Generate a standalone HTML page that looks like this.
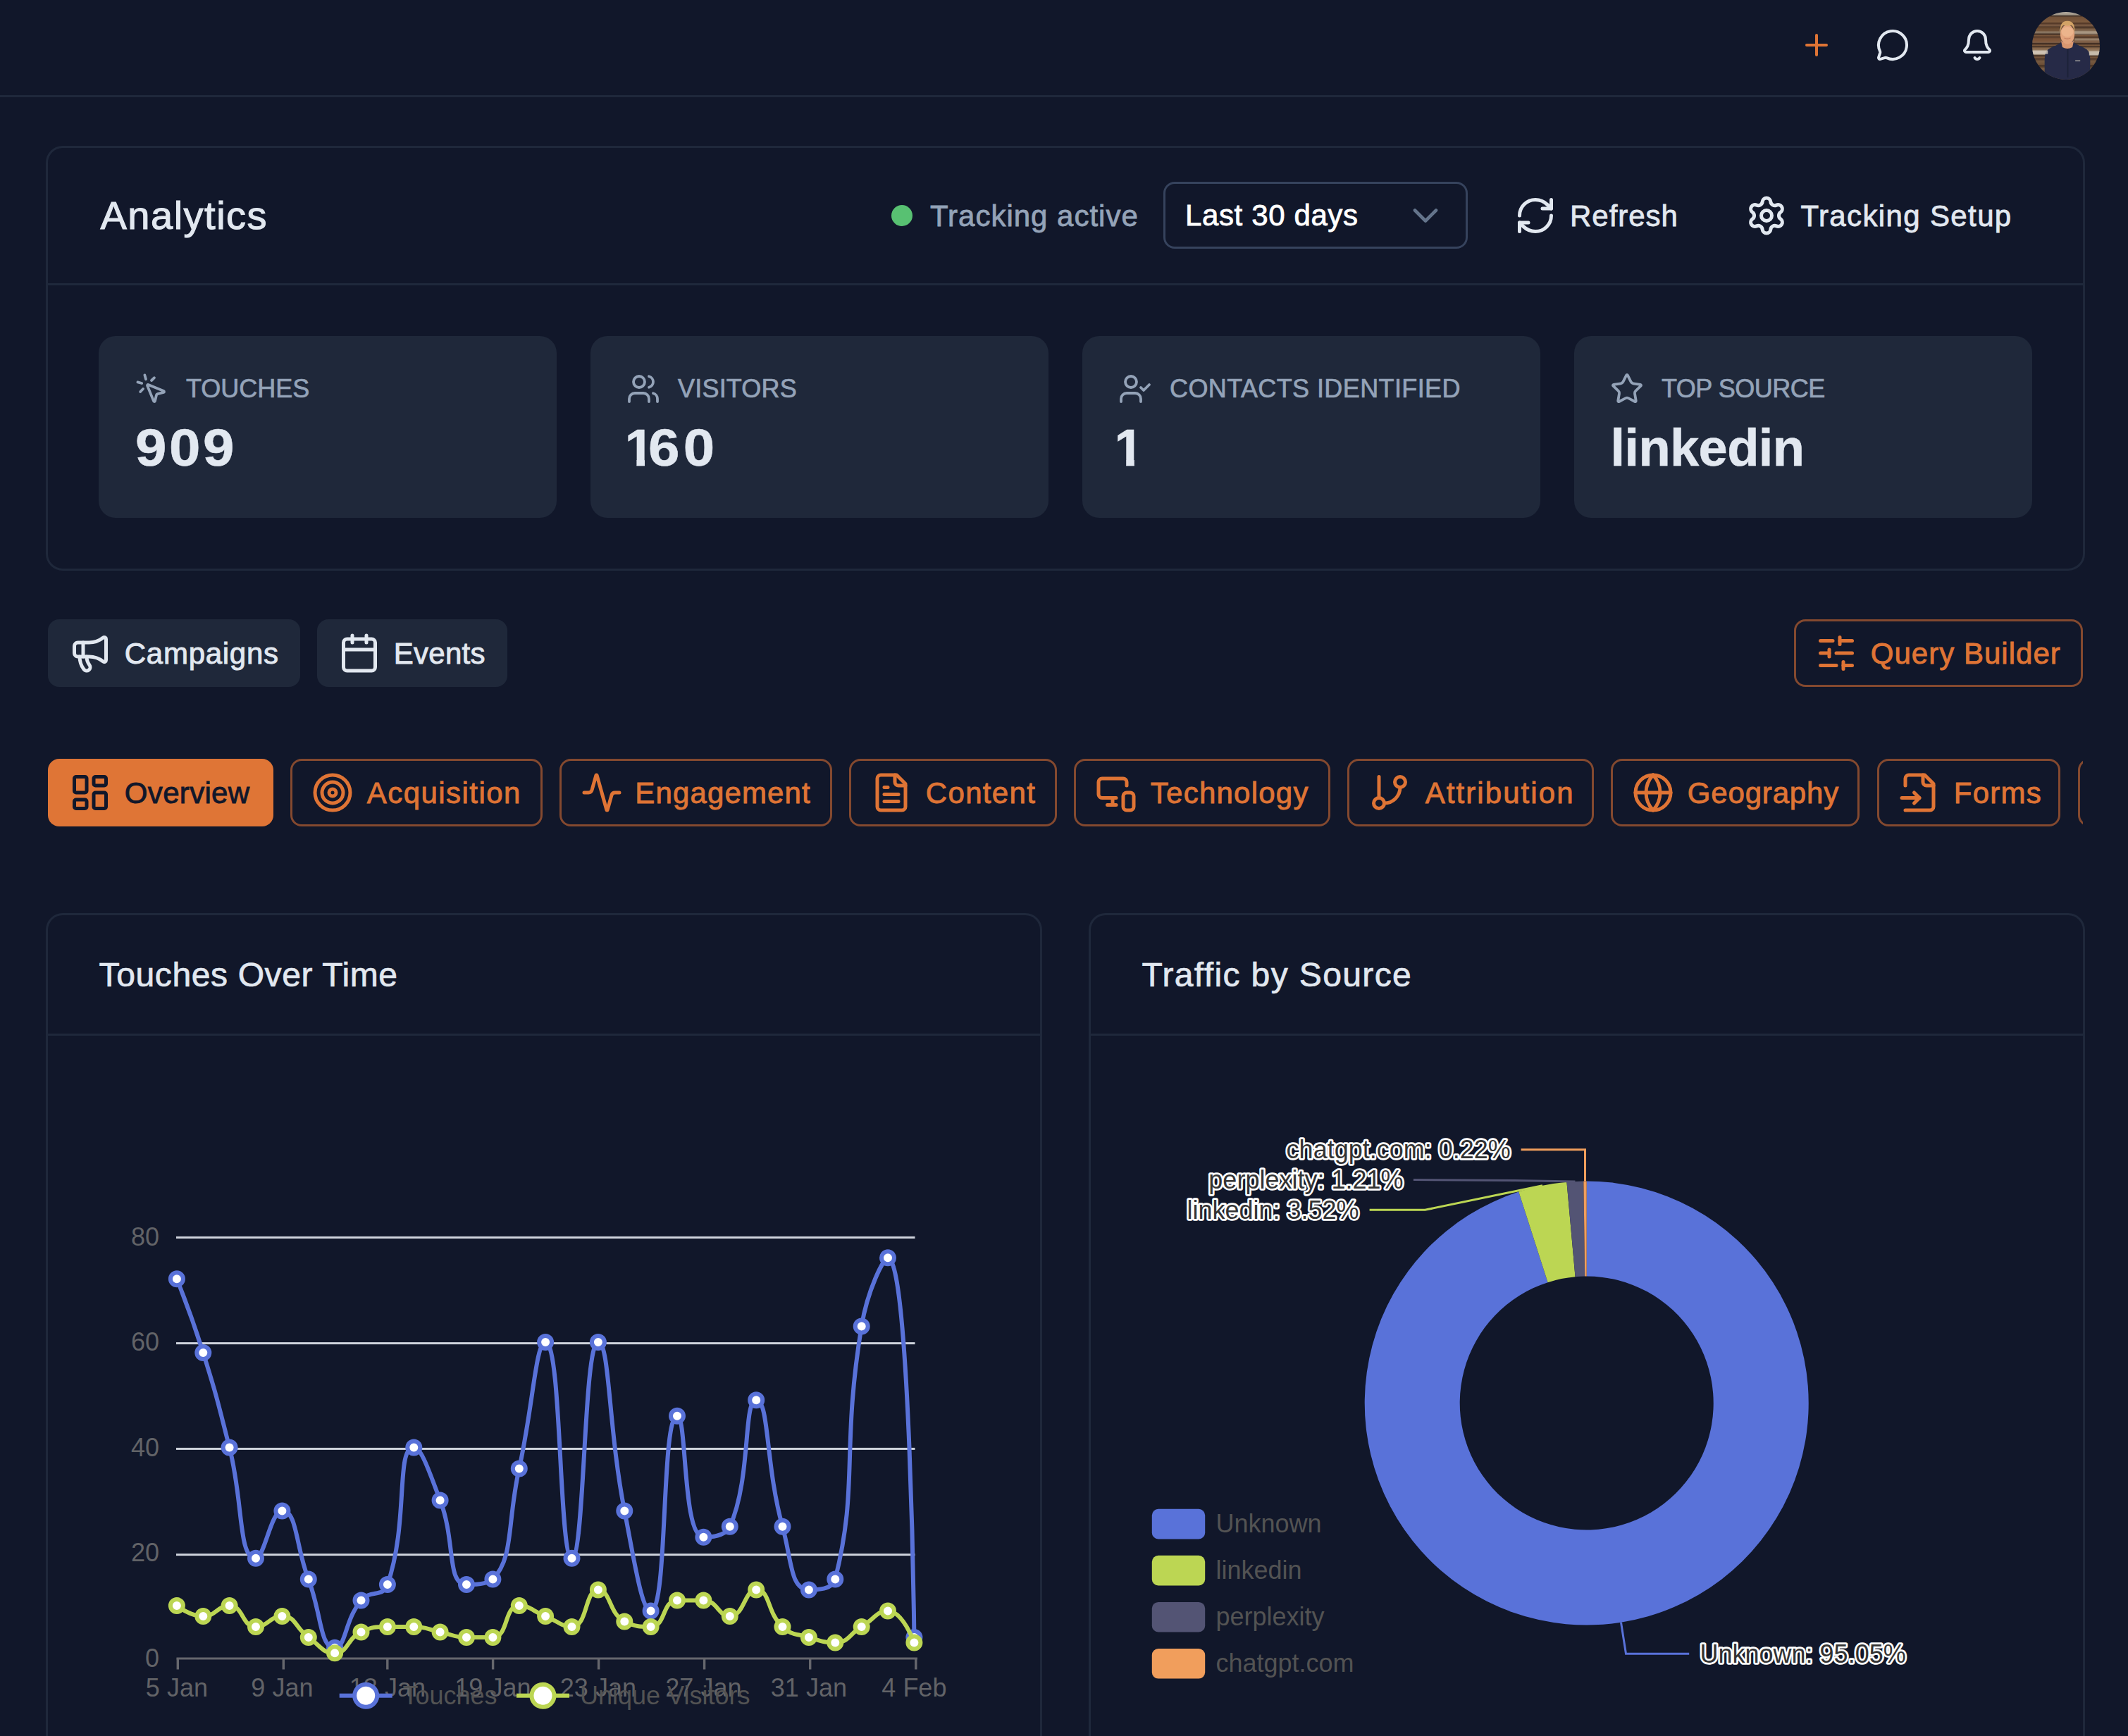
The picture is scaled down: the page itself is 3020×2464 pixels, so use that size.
<!DOCTYPE html>
<html lang="en">
<head>
<meta charset="utf-8">
<title>Analytics</title>
<style>
*{box-sizing:border-box;margin:0;padding:0}
html,body{width:3020px;height:2464px;overflow:hidden;background:#11172a}
body{position:relative;font-family:"Liberation Sans",Arial,sans-serif;color:#e2e8f0;font-size:42px;-webkit-font-smoothing:antialiased}
svg.ic{display:block;fill:none;stroke:currentColor;stroke-width:2;stroke-linecap:round;stroke-linejoin:round;flex:none}
.abs{position:absolute}
/* top bar */
.topbar{position:absolute;left:0;top:0;width:3020px;height:138px;border-bottom:3px solid #1f283b}
.topbar .ic{position:absolute;width:48px;height:48px;top:40px;color:#e2e8f0}
.avatar{position:absolute;left:2883.700px;top:16.600px;width:96.400px;height:96.400px;border-radius:50%;overflow:hidden}
/* cards */
.card{position:absolute;border:3px solid #1f283b;border-radius:24px;background:#11172a}
.card-head{position:absolute;left:0;top:0;right:0;border-bottom:3px solid #1f283b}
h1{position:absolute;left:74.5px;top:64.2px;font-size:56px;line-height:64px;font-weight:normal;letter-spacing:1.5px;-webkit-text-stroke:1.1px #e2e8f0;white-space:nowrap}
h2{position:absolute;left:72.5px;top:48.5px;font-size:48px;line-height:72px;font-weight:normal;white-space:nowrap;-webkit-text-stroke:.7px #e2e8f0}
.t{position:absolute;white-space:nowrap;line-height:60px;font-size:42px;-webkit-text-stroke:.8px currentColor}
.muted{color:#94a3b8;-webkit-text-stroke-width:.8px}
.dot{position:absolute;width:30px;height:30px;border-radius:50%;background:#58c172}
.select{position:absolute;border:3px solid #36435d;border-radius:16px;color:#fff}
.ic60{position:absolute;width:60px;height:60px}
/* stats */
.stat{position:absolute;top:267px;width:650px;height:258px;border-radius:24px;background:#1f283a}
.stat .ic{position:absolute;left:51px;top:51px;width:48px;height:48px;color:#94a3b8;stroke-width:1.9}
.stat .lab{position:absolute;left:124px;top:45.3px;font-size:36px;line-height:60px;color:#94a3b8;-webkit-text-stroke:.7px #94a3b8;white-space:nowrap}
.stat .val .w{display:inline-block;transform:scaleX(1.08);transform-origin:0 50%;letter-spacing:3.3px}
.stat .val .one{display:inline-block;clip-path:polygon(0 0,100% 0,100% 61.7px,28.2px 61.7px,28.2px 100%,16.6px 100%,16.6px 61.7px,0 61.7px)}
.stat .val{position:absolute;left:51.5px;top:114px;-webkit-text-stroke:0.6px #e2e8f0;transform-origin:0 50%;font-size:74px;line-height:90px;font-weight:bold;color:#e2e8f0;white-space:nowrap}
/* buttons */
.btn{position:absolute;height:96px;border-radius:16px;display:flex;align-items:center;padding-left:30px;white-space:nowrap;font-size:42px;-webkit-text-stroke:0.9px currentColor}
.btn .ic{width:60px;height:60px;margin-right:18.8px}
.btn span{position:relative;top:.6px}
.btn.fill{background:#1f283a;color:#e2e8f0}
.btn.out{border:3px solid #84492f;color:#df7435;padding-left:27px}
.btn.act{background:#df7536;color:#11172a}
.tabs{position:absolute;left:68px;top:1077px;width:2888px;height:96px;overflow:hidden}
.tabs .btn{top:0}
svg text{font-family:"Liberation Sans",Arial,sans-serif;font-size:36px;fill:#626367}
svg text.lg{fill:#535353}
svg text.pl{fill:#333;stroke:#fff;stroke-width:5.4px;paint-order:stroke fill;stroke-linejoin:round}
</style>
</head>
<body>
<header class="topbar">
  <svg class="ic" style="left:2554px;color:#df7435" viewBox="0 0 24 24"><path d="M5 12h14"/><path d="M12 5v14"/></svg>
  <svg class="ic" style="left:2662px" viewBox="0 0 24 24"><path d="M2.992 16.342a2 2 0 0 1 .094 1.167l-1.065 3.29a1 1 0 0 0 1.236 1.168l3.413-.998a2 2 0 0 1 1.099.092 10 10 0 1 0-4.777-4.719"/></svg>
  <svg class="ic" style="left:2782px" viewBox="0 0 24 24"><path d="M10.268 21a2 2 0 0 0 3.464 0"/><path d="M3.262 15.326A1 1 0 0 0 4 17h16a1 1 0 0 0 .74-1.673C19.41 13.956 18 12.499 18 8A6 6 0 0 0 6 8c0 4.499-1.411 5.956-2.738 7.326"/></svg>
  <div class="avatar">
    <svg width="97" height="97" viewBox="0 0 96 96">
      <defs><filter id="bl" x="-5%" y="-5%" width="110%" height="110%"><feGaussianBlur stdDeviation="0.7"/></filter>
      <linearGradient id="wd" x1="0" y1="0" x2="0" y2="1">
        <stop offset="0" stop-color="#b5ada1"/><stop offset=".045" stop-color="#9e9384"/><stop offset=".055" stop-color="#35271f"/>
        <stop offset=".075" stop-color="#6f5038"/><stop offset=".14" stop-color="#7d5a3d"/><stop offset=".175" stop-color="#4e3526"/>
        <stop offset=".19" stop-color="#86644a"/><stop offset=".225" stop-color="#453124"/><stop offset=".25" stop-color="#775a42"/>
        <stop offset=".30" stop-color="#8f7c68"/><stop offset=".325" stop-color="#433024"/><stop offset=".345" stop-color="#7a563b"/>
        <stop offset=".37" stop-color="#4f3728"/><stop offset=".40" stop-color="#7b5b42"/><stop offset=".445" stop-color="#83634b"/>
        <stop offset=".46" stop-color="#3c2a20"/><stop offset=".49" stop-color="#7a573c"/><stop offset=".50" stop-color="#433024"/>
        <stop offset=".53" stop-color="#86664a"/><stop offset=".585" stop-color="#a08a72"/><stop offset=".62" stop-color="#b3a18b"/>
        <stop offset=".635" stop-color="#463225"/><stop offset=".67" stop-color="#7b593d"/><stop offset=".685" stop-color="#4c3527"/>
        <stop offset=".72" stop-color="#775a40"/><stop offset=".77" stop-color="#6c4f37"/><stop offset=".785" stop-color="#3f2d20"/>
        <stop offset=".83" stop-color="#7c5d43"/><stop offset=".9" stop-color="#624733"/><stop offset="1" stop-color="#6e523a"/>
      </linearGradient></defs>
      <rect width="96" height="96" fill="url(#wd)"/>
      <g filter="url(#bl)">
      <rect x="58" y="27" width="40" height="4.5" fill="#b5a48e" opacity=".7"/><rect x="60" y="37" width="40" height="3" fill="#a99783" opacity=".6"/>
      <rect x="0" y="21" width="38" height="6" fill="#6b4a30" opacity=".7"/><rect x="0" y="36" width="40" height="6" fill="#7a4f30" opacity=".6"/>
      <path d="M17.5 98V66q0-9 5-13.5 4-3 11-5.5l6-3.5 2-3h16l2 3 6 3.5q7 2.500 11 5.500 5 4.500 5 13.500v32z" fill="#252b46"/>
      <path d="M40.500 40.500q9 6 18 0l-2 9q-7 4-14 0z" fill="#d9976f"/>
      <ellipse cx="49.500" cy="31.500" rx="10" ry="13.500" fill="#e3a47d"/>
      <ellipse cx="49.500" cy="28" rx="8.500" ry="7" fill="#ecb48c"/>
      <path d="M39.500 29q-1.500-16.500 10-16.500 11.500 0 10 16.500-1.500-9.500-4.500-10.500-5.500 1.500-11 0-3 1-4.500 10.500z" fill="#d3a366"/>
      <path d="M45 36.500q4.500 2.500 9 0" stroke="#c27a5e" stroke-width="1.100" fill="none"/><rect x="0" y="54" width="22" height="5" fill="#d9d0c3" opacity=".8"/><rect x="80" y="55" width="16" height="6" fill="#cfc5b6" opacity=".8"/>
      <path d="M50 52v40" stroke="#1b2038" stroke-width="1.600"/>
      <rect x="60.500" y="68" width="7" height="1.300" fill="#b9b3ad"/>
      </g>
    </svg>
  </div>
</header>

<main>
<section class="card" style="left:65px;top:207px;width:2894px;height:603px">
  <div class="card-head" style="height:195px">
    <h1>Analytics</h1>
    <span class="dot" style="left:1197px;top:81px"></span>
    <span class="t muted" style="letter-spacing:0.99px;left:1252px;top:66.800px" id="t_track">Tracking active</span>
    <div class="select" style="left:1583px;top:48px;width:432px;height:95px">
      <span class="t" style="letter-spacing:0.62px;left:28px;top:15.300px;color:#fff" id="t_last">Last 30 days</span>
      <svg class="ic ic60" style="left:339px;top:15px;color:#64748b;stroke-width:1.85" viewBox="0 0 24 24"><path d="m6 9 6 6 6-6"/></svg>
    </div>
    <svg class="ic ic60" style="left:2081px;top:65.5px" viewBox="0 0 24 24"><path d="M3 12a9 9 0 0 1 9-9 9.75 9.75 0 0 1 6.74 2.74L21 8"/><path d="M21 3v5h-5"/><path d="M21 12a9 9 0 0 1-9 9 9.75 9.75 0 0 1-6.74-2.74L3 16"/><path d="M8 16H3v5"/></svg>
    <span class="t" style="letter-spacing:0.98px;left:2160px;top:66.800px" id="t_refresh">Refresh</span>
    <svg class="ic ic60" style="left:2408.5px;top:65.5px" viewBox="0 0 24 24"><path d="M9.671 4.136a2.34 2.34 0 0 1 4.659 0 2.34 2.34 0 0 0 3.319 1.915 2.34 2.34 0 0 1 2.33 4.033 2.34 2.34 0 0 0 0 3.831 2.34 2.34 0 0 1-2.33 4.033 2.34 2.34 0 0 0-3.319 1.915 2.34 2.34 0 0 1-4.659 0 2.34 2.34 0 0 0-3.32-1.915 2.34 2.34 0 0 1-2.33-4.033 2.34 2.34 0 0 0 0-3.831A2.34 2.34 0 0 1 6.35 6.051a2.34 2.34 0 0 0 3.319-1.915"/><circle cx="12" cy="12" r="3"/></svg>
    <span class="t" style="letter-spacing:1.37px;left:2487.500px;top:66.800px" id="t_setup">Tracking Setup</span>
  </div>
  <div class="stat" style="left:72px">
    <svg class="ic" viewBox="0 0 24 24"><path d="M14 4.1 12 6"/><path d="m5.1 8-2.9-.8"/><path d="m6 12-1.9 2"/><path d="M7.2 2.2 8 5.1"/><path d="M9.037 9.69a.498.498 0 0 1 .653-.653l11 4.5a.5.5 0 0 1-.074.949l-4.349 1.041a1 1 0 0 0-.74.739l-1.04 4.35a.5.5 0 0 1-.95.074z"/></svg>
    <span class="lab" style="letter-spacing:0.00px" id="l1">TOUCHES</span><span class="val" id="v1"><span class="w">909</span></span>
  </div>
  <div class="stat" style="left:770px">
    <svg class="ic" viewBox="0 0 24 24"><path d="M16 21v-2a4 4 0 0 0-4-4H6a4 4 0 0 0-4 4v2"/><path d="M16 3.128a4 4 0 0 1 0 7.744"/><path d="M22 21v-2a4 4 0 0 0-3-3.87"/><circle cx="9" cy="7" r="4"/></svg>
    <span class="lab" style="letter-spacing:0.20px" id="l2">VISITORS</span><span class="val" id="v2" style="left:48.8px"><span class="one">1</span><span class="w" style="margin-left:-8px;letter-spacing:5px">60</span></span>
  </div>
  <div class="stat" style="left:1468px">
    <svg class="ic" viewBox="0 0 24 24"><path d="m16 11 2 2 4-4"/><path d="M16 21v-2a4 4 0 0 0-4-4H6a4 4 0 0 0-4 4v2"/><circle cx="9" cy="7" r="4"/></svg>
    <span class="lab" style="letter-spacing:0.40px" id="l3">CONTACTS IDENTIFIED</span><span class="val" id="v3" style="left:45.6px"><span class="one">1</span></span>
  </div>
  <div class="stat" style="left:2166px">
    <svg class="ic" viewBox="0 0 24 24"><path d="M11.525 2.295a.53.53 0 0 1 .95 0l2.31 4.679a2.123 2.123 0 0 0 1.595 1.16l5.166.756a.53.53 0 0 1 .294.904l-3.736 3.638a2.123 2.123 0 0 0-.611 1.878l.882 5.14a.53.53 0 0 1-.771.56l-4.618-2.428a2.122 2.122 0 0 0-1.973 0L6.396 21.01a.53.53 0 0 1-.77-.56l.881-5.139a2.122 2.122 0 0 0-.611-1.879L2.16 9.795a.53.53 0 0 1 .294-.906l5.165-.755a2.122 2.122 0 0 0 1.597-1.16z"/></svg>
    <span class="lab" style="letter-spacing:-0.50px" id="l4">TOP SOURCE</span><span class="val" style="letter-spacing:-0.6px" id="v4">linkedin</span>
  </div>
</section>

<div class="btn fill" style="left:68px;top:879px;width:358px">
  <svg class="ic" viewBox="0 0 24 24"><path d="M11 6a13 13 0 0 0 8.4-2.8A1 1 0 0 1 21 4v12a1 1 0 0 1-1.6.8A13 13 0 0 0 11 14H5a2 2 0 0 1-2-2V8a2 2 0 0 1 2-2z"/><path d="M6 14a12 12 0 0 0 2.4 7.2 2 2 0 0 0 3.2-2.4A8 8 0 0 1 10 14"/><path d="M8 6v8"/></svg>
  <span style="letter-spacing:0.72px" id="b1">Campaigns</span>
</div>
<div class="btn fill" style="left:450px;top:879px;width:270px">
  <svg class="ic" viewBox="0 0 24 24"><path d="M8 2v4"/><path d="M16 2v4"/><rect width="18" height="18" x="3" y="4" rx="2"/><path d="M3 10h18"/></svg>
  <span style="letter-spacing:0.26px" id="b2">Events</span>
</div>
<div class="btn out" style="left:2546px;top:879px;width:410px">
  <svg class="ic" viewBox="0 0 24 24"><path d="M10 5H3"/><path d="M12 19H3"/><path d="M14 3v4"/><path d="M16 17v4"/><path d="M21 12h-9"/><path d="M21 19h-5"/><path d="M21 5h-7"/><path d="M8 10v4"/><path d="M8 12H3"/></svg>
  <span style="letter-spacing:1.02px" id="b3">Query Builder</span>
</div>

<nav class="tabs">
  <div class="btn act" style="left:0;width:320px">
    <svg class="ic" viewBox="0 0 24 24"><rect width="7" height="9" x="3" y="3" rx="1"/><rect width="7" height="5" x="14" y="3" rx="1"/><rect width="7" height="9" x="14" y="12" rx="1"/><rect width="7" height="5" x="3" y="16" rx="1"/></svg>
    <span style="letter-spacing:0.33px" id="n1">Overview</span>
  </div>
  <div class="btn out" style="left:344px;width:358px">
    <svg class="ic" viewBox="0 0 24 24"><circle cx="12" cy="12" r="10"/><circle cx="12" cy="12" r="6"/><circle cx="12" cy="12" r="2"/></svg>
    <span style="letter-spacing:1.44px" id="n2">Acquisition</span>
  </div>
  <div class="btn out" style="left:726px;width:387px">
    <svg class="ic" viewBox="0 0 24 24"><path d="M22 12h-2.48a2 2 0 0 0-1.93 1.46l-2.35 8.36a.25.25 0 0 1-.48 0L9.24 2.18a.25.25 0 0 0-.48 0l-2.35 8.36A2 2 0 0 1 4.49 12H2"/></svg>
    <span style="letter-spacing:1.14px;left:-1.5px" id="n3">Engagement</span>
  </div>
  <div class="btn out" style="left:1137px;width:295px">
    <svg class="ic" viewBox="0 0 24 24"><path d="M15 2H6a2 2 0 0 0-2 2v16a2 2 0 0 0 2 2h12a2 2 0 0 0 2-2V7Z"/><path d="M14 2v4a2 2 0 0 0 2 2h4"/><path d="M10 9H8"/><path d="M16 13H8"/><path d="M16 17H8"/></svg>
    <span style="letter-spacing:1.33px" id="n4">Content</span>
  </div>
  <div class="btn out" style="left:1456px;width:364px">
    <svg class="ic" viewBox="0 0 24 24"><path d="M18 8V6a2 2 0 0 0-2-2H4a2 2 0 0 0-2 2v7a2 2 0 0 0 2 2h8"/><path d="M10 19v-3.96 3.15"/><path d="M7 19h5"/><rect width="6" height="10" x="16" y="12" rx="2"/></svg>
    <span style="letter-spacing:1.24px" id="n5">Technology</span>
  </div>
  <div class="btn out" style="left:1844px;width:350px">
    <svg class="ic" viewBox="0 0 24 24"><line x1="6" x2="6" y1="3" y2="15"/><circle cx="18" cy="6" r="3"/><circle cx="6" cy="18" r="3"/><path d="M18 9a9 9 0 0 1-9 9"/></svg>
    <span style="letter-spacing:2.06px;left:2px" id="n6">Attribution</span>
  </div>
  <div class="btn out" style="left:2218px;width:353px">
    <svg class="ic" viewBox="0 0 24 24"><circle cx="12" cy="12" r="10"/><path d="M12 2a14.5 14.5 0 0 0 0 20 14.5 14.5 0 0 0 0-20"/><path d="M2 12h20"/></svg>
    <span style="letter-spacing:0.82px" id="n7">Geography</span>
  </div>
  <div class="btn out" style="left:2596px;width:260px">
    <svg class="ic" viewBox="0 0 24 24"><path d="M4 22h14a2 2 0 0 0 2-2V7l-5-5H6a2 2 0 0 0-2 2v4"/><path d="M14 2v4a2 2 0 0 0 2 2h4"/><path d="M2 15h10"/><path d="m9 18 3-3-3-3"/></svg>
    <span style="letter-spacing:1.25px" id="n8">Forms</span>
  </div>
  <div class="btn out" style="left:2881px;width:300px"></div>
</nav>

<section class="card" style="left:65px;top:1296px;width:1414px;height:1168px;border-bottom:0;border-radius:24px 24px 0 0">
  <div class="card-head" style="height:171px"><h2 style="letter-spacing:0.63px" id="h_a">Touches Over Time</h2></div>
</section>
<section class="card" style="left:1545px;top:1296px;width:1414px;height:1168px;border-bottom:0;border-radius:24px 24px 0 0">
  <div class="card-head" style="height:171px"><h2 style="letter-spacing:1.38px" id="h_b">Traffic by Source</h2></div>
</section>
<svg class="abs" style="left:0;top:1480px" width="3020" height="984" viewBox="0 1480 3020 984">
<rect x="250" y="2205.1" width="1048.5" height="3" fill="#cfd3dc"/>
<rect x="250" y="2054.9" width="1048.5" height="3" fill="#cfd3dc"/>
<rect x="250" y="1905.1" width="1048.5" height="3" fill="#cfd3dc"/>
<rect x="250" y="1754.9" width="1048.5" height="3" fill="#cfd3dc"/>
<rect x="250.5" y="2352.5" width="1051.5" height="3" fill="#66676d"/>
<rect x="250.6" y="2354" width="3.4" height="15.5" fill="#66676d"/>
<rect x="400.6" y="2354" width="3.4" height="15.5" fill="#66676d"/>
<rect x="548.1" y="2354" width="3.4" height="15.5" fill="#66676d"/>
<rect x="697.9" y="2354" width="3.4" height="15.5" fill="#66676d"/>
<rect x="847.9" y="2354" width="3.4" height="15.5" fill="#66676d"/>
<rect x="997.9" y="2354" width="3.4" height="15.5" fill="#66676d"/>
<rect x="1148.0" y="2354" width="3.4" height="15.5" fill="#66676d"/>
<rect x="1298.1" y="2354" width="3.4" height="15.5" fill="#66676d"/>
<text x="226" y="2366.0" text-anchor="end">0</text>
<text x="226" y="2216.4" text-anchor="end">20</text>
<text x="226" y="2066.8" text-anchor="end">40</text>
<text x="226" y="1917.2" text-anchor="end">60</text>
<text x="226" y="1767.6" text-anchor="end">80</text>
<text x="250.9" y="2407.8" text-anchor="middle">5 Jan</text>
<text x="400.4" y="2407.8" text-anchor="middle">9 Jan</text>
<text x="549.9" y="2407.8" text-anchor="middle">13 Jan</text>
<text x="699.4" y="2407.8" text-anchor="middle">19 Jan</text>
<text x="848.9" y="2407.8" text-anchor="middle">23 Jan</text>
<text x="998.4" y="2407.8" text-anchor="middle">27 Jan</text>
<text x="1147.9" y="2407.8" text-anchor="middle">31 Jan</text>
<text x="1297.4" y="2407.8" text-anchor="middle">4 Feb</text>
<path d="M250.90 1815.24C250.90 1815.24 271.71 1866.93 288.27 1919.96C309.09 1986.61 308.31 1986.93 325.65 2054.60C345.69 2132.79 337.72 2211.68 363.02 2211.68C375.09 2211.68 384.52 2144.36 400.40 2144.36C421.89 2144.36 419.09 2192.98 437.77 2241.60C456.46 2290.22 453.66 2338.84 475.15 2338.84C491.03 2338.84 488.66 2300.18 512.52 2271.52C526.04 2255.30 543.16 2268.65 549.90 2249.08C580.53 2160.19 561.00 2054.60 587.27 2054.60C598.37 2054.60 609.70 2090.50 624.65 2129.40C647.07 2187.74 633.36 2249.08 662.02 2249.08C670.74 2249.08 692.26 2249.08 699.40 2241.60C729.64 2209.91 719.27 2163.32 736.77 2084.52C756.65 1995.02 760.23 1905.00 774.15 1905.00C797.60 1905.00 792.84 2211.68 811.52 2211.68C830.21 2211.68 827.95 1905.00 848.90 1905.00C865.33 1905.00 863.01 2025.64 886.27 2144.36C900.39 2216.38 910.76 2286.48 923.65 2286.48C948.14 2286.48 938.10 2009.72 961.02 2009.72C975.48 2009.72 967.98 2181.76 998.40 2181.76C1005.36 2181.76 1029.05 2181.76 1035.78 2166.80C1066.42 2098.66 1054.46 1987.28 1073.15 1987.28C1091.84 1987.28 1086.10 2078.81 1110.53 2166.80C1123.48 2213.45 1121.47 2256.56 1147.90 2256.56C1158.84 2256.56 1181.53 2256.56 1185.28 2241.60C1218.90 2107.46 1193.65 2059.61 1222.65 1882.56C1231.02 1831.47 1253.98 1785.32 1260.03 1785.32C1291.35 1785.32 1297.40 2323.88 1297.40 2323.88" fill="none" stroke="#5972d9" stroke-width="6" stroke-linejoin="bevel"/><g fill="#fff" stroke="#5972d9" stroke-width="6"><circle cx="250.9" cy="1815.2" r="9"/><circle cx="288.3" cy="1920.0" r="9"/><circle cx="325.6" cy="2054.6" r="9"/><circle cx="363.0" cy="2211.7" r="9"/><circle cx="400.4" cy="2144.4" r="9"/><circle cx="437.8" cy="2241.6" r="9"/><circle cx="475.1" cy="2338.8" r="9"/><circle cx="512.5" cy="2271.5" r="9"/><circle cx="549.9" cy="2249.1" r="9"/><circle cx="587.3" cy="2054.6" r="9"/><circle cx="624.6" cy="2129.4" r="9"/><circle cx="662.0" cy="2249.1" r="9"/><circle cx="699.4" cy="2241.6" r="9"/><circle cx="736.8" cy="2084.5" r="9"/><circle cx="774.1" cy="1905.0" r="9"/><circle cx="811.5" cy="2211.7" r="9"/><circle cx="848.9" cy="1905.0" r="9"/><circle cx="886.3" cy="2144.4" r="9"/><circle cx="923.6" cy="2286.5" r="9"/><circle cx="961.0" cy="2009.7" r="9"/><circle cx="998.4" cy="2181.8" r="9"/><circle cx="1035.8" cy="2166.8" r="9"/><circle cx="1073.2" cy="1987.3" r="9"/><circle cx="1110.5" cy="2166.8" r="9"/><circle cx="1147.9" cy="2256.6" r="9"/><circle cx="1185.3" cy="2241.6" r="9"/><circle cx="1222.7" cy="1882.6" r="9"/><circle cx="1260.0" cy="1785.3" r="9"/><circle cx="1297.4" cy="2323.9" r="9"/></g>
<path d="M250.90 2279.00C250.90 2279.00 269.59 2293.96 288.27 2293.96C306.96 2293.96 308.58 2279.00 325.65 2279.00C345.95 2279.00 342.72 2308.92 363.02 2308.92C380.10 2308.92 383.33 2293.96 400.40 2293.96C420.70 2293.96 418.21 2310.18 437.77 2323.88C455.59 2336.36 457.34 2346.32 475.15 2346.32C494.71 2346.32 491.72 2325.80 512.52 2316.40C529.09 2308.92 531.03 2308.92 549.90 2308.92C568.40 2308.92 568.77 2308.92 587.27 2308.92C606.15 2308.92 605.96 2312.66 624.65 2316.40C643.34 2320.14 643.15 2323.88 662.02 2323.88C680.53 2323.88 684.82 2323.88 699.40 2323.88C722.19 2323.88 714.65 2279.00 736.77 2279.00C752.03 2279.00 755.46 2286.48 774.15 2293.96C792.84 2301.44 797.14 2308.92 811.52 2308.92C834.51 2308.92 829.31 2256.56 848.90 2256.56C866.69 2256.56 863.66 2289.98 886.27 2301.44C901.03 2308.92 907.99 2308.92 923.65 2308.92C945.37 2308.92 939.13 2271.52 961.02 2271.52C976.50 2271.52 981.15 2271.52 998.40 2271.52C1018.52 2271.52 1018.89 2293.96 1035.78 2293.96C1056.26 2293.96 1056.29 2256.56 1073.15 2256.56C1093.66 2256.56 1087.54 2288.22 1110.53 2308.92C1124.91 2321.88 1128.70 2318.12 1147.90 2323.88C1166.08 2329.34 1167.84 2331.36 1185.28 2331.36C1205.22 2331.36 1203.96 2320.14 1222.65 2308.92C1241.34 2297.70 1244.05 2286.48 1260.03 2286.48C1281.43 2286.48 1297.40 2331.36 1297.40 2331.36" fill="none" stroke="#bcd653" stroke-width="6" stroke-linejoin="bevel"/><g fill="#fff" stroke="#bcd653" stroke-width="6"><circle cx="250.9" cy="2279.0" r="9"/><circle cx="288.3" cy="2294.0" r="9"/><circle cx="325.6" cy="2279.0" r="9"/><circle cx="363.0" cy="2308.9" r="9"/><circle cx="400.4" cy="2294.0" r="9"/><circle cx="437.8" cy="2323.9" r="9"/><circle cx="475.1" cy="2346.3" r="9"/><circle cx="512.5" cy="2316.4" r="9"/><circle cx="549.9" cy="2308.9" r="9"/><circle cx="587.3" cy="2308.9" r="9"/><circle cx="624.6" cy="2316.4" r="9"/><circle cx="662.0" cy="2323.9" r="9"/><circle cx="699.4" cy="2323.9" r="9"/><circle cx="736.8" cy="2279.0" r="9"/><circle cx="774.1" cy="2294.0" r="9"/><circle cx="811.5" cy="2308.9" r="9"/><circle cx="848.9" cy="2256.6" r="9"/><circle cx="886.3" cy="2301.4" r="9"/><circle cx="923.6" cy="2308.9" r="9"/><circle cx="961.0" cy="2271.5" r="9"/><circle cx="998.4" cy="2271.5" r="9"/><circle cx="1035.8" cy="2294.0" r="9"/><circle cx="1073.2" cy="2256.6" r="9"/><circle cx="1110.5" cy="2308.9" r="9"/><circle cx="1147.9" cy="2323.9" r="9"/><circle cx="1185.3" cy="2331.4" r="9"/><circle cx="1222.7" cy="2308.9" r="9"/><circle cx="1260.0" cy="2286.5" r="9"/><circle cx="1297.4" cy="2331.4" r="9"/></g>
<rect x="481.7" y="2403.7" width="75" height="6" fill="#5972d9"/><circle cx="519.2" cy="2406.7" r="16" fill="#fff" stroke="#5972d9" stroke-width="6"/><text x="571.5" y="2419" class="lg">Touches</text>
<rect x="733" y="2403.7" width="75" height="6" fill="#bcd653"/><circle cx="770.5" cy="2406.7" r="16" fill="#fff" stroke="#bcd653" stroke-width="6"/><text x="823" y="2419" class="lg">Unique Visitors</text>
<path d="M2251.70 1676.50A315.0 315.0 0 1 1 2155.29 1691.62L2196.61 1820.14A180.0 180.0 0 1 0 2251.70 1811.50Z" fill="#5972d9"/>
<path d="M2155.29 1691.62A315.0 315.0 0 0 1 2223.43 1677.77L2235.55 1812.23A180.0 180.0 0 0 0 2196.61 1820.14Z" fill="#bcd653"/>
<path d="M2223.43 1677.77A315.0 315.0 0 0 1 2247.35 1676.53L2249.21 1811.52A180.0 180.0 0 0 0 2235.55 1812.23Z" fill="#535474"/>
<path d="M2247.35 1676.53A315.0 315.0 0 0 1 2251.70 1676.50L2251.70 1811.50A180.0 180.0 0 0 0 2249.21 1811.52Z" fill="#f19e5c"/>
<polyline points="2300.5,2302.7 2307.5,2347.2 2397.2,2347.2" fill="none" stroke="#5972d9" stroke-width="3"/>
<text class="pl" x="2412.5" y="2359.8">Unknown: 95.05%</text>
<polyline points="2189.0,1682.8 2022.4,1717.3 1943.6,1717.3" fill="none" stroke="#bcd653" stroke-width="3"/>
<text class="pl" x="1928.6" y="1729.9" text-anchor="end">linkedin: 3.52%</text>
<polyline points="2235.4,1676.9 2150.0,1675.5 2005.9,1674.6" fill="none" stroke="#535474" stroke-width="3"/>
<text class="pl" x="1991.5" y="1687.2" text-anchor="end">perplexity: 1.21%</text>
<polyline points="2249.5,1676.5 2249.5,1631.8 2158.6,1631.8" fill="none" stroke="#f19e5c" stroke-width="3"/>
<text class="pl" x="2143.8" y="1643.6" text-anchor="end">chatgpt.com: 0.22%</text>
<rect x="1634.8" y="2141.8" width="75.4" height="42.6" rx="9" fill="#5972d9"/>
<text class="lg" x="1725.5" y="2175.1">Unknown</text>
<rect x="1634.8" y="2207.8" width="75.4" height="42.6" rx="9" fill="#bcd653"/>
<text class="lg" x="1725.5" y="2241.1">linkedin</text>
<rect x="1634.8" y="2273.9" width="75.4" height="42.6" rx="9" fill="#535474"/>
<text class="lg" x="1725.5" y="2307.2">perplexity</text>
<rect x="1634.8" y="2340.0" width="75.4" height="42.6" rx="9" fill="#f19e5c"/>
<text class="lg" x="1725.5" y="2373.3">chatgpt.com</text>
</svg>
</main>
<script>(function(){var d=window.devicePixelRatio||1,w=window.innerWidth||0;if(d!==1&&Math.abs(w*d-3020)<4){document.documentElement.style.zoom=1/d}})();</script>
</body>
</html>
